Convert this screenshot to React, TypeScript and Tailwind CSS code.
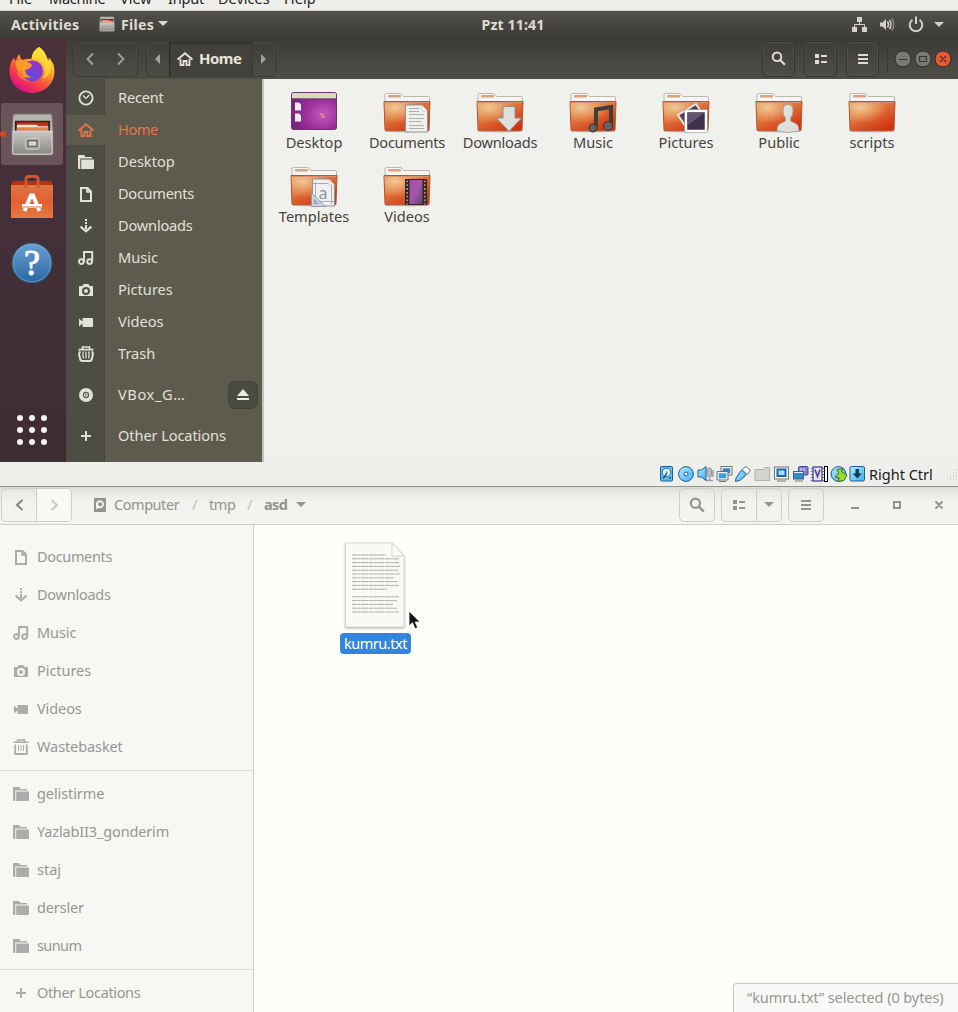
import React from "react";

type Glyph =
  | "recent" | "home" | "folder" | "doc" | "download" | "music" | "camera" | "video"
  | "trash" | "bin" | "disc" | "plus" | "search" | "list" | "menu" | "disk";

function Icon({ name, size = 16 }: { name: Glyph; size?: number }) {
  const s = { fill: "none", stroke: "currentColor", strokeWidth: 2 };
  const shapes: Record<Glyph, React.ReactNode> = {
    recent: (
      <>
        <circle cx="8" cy="8" r="6.6" {...s} strokeWidth={1.9} />
        <path d="M5 5.6 8 8.4 11.4 5" {...s} strokeWidth={1.4} />
      </>
    ),
    home: (
      <>
        <path d="M.6 8.6 8 2.2l7.4 6.4" {...s} />
        <path d="M3.5 8v6.2h3V10h3v4.2h3V8" {...s} strokeWidth={1.8} />
      </>
    ),
    folder: (
      <>
        <path d="M0 1.8Q0 1 .8 1H6l1.5 2H14v1.5H2.3V15H.8Q0 15 0 14.2z" fill="currentColor" />
        <path d="M3.2 5.5H16v8.7q0 .8-.8.8H3.2z" fill="currentColor" />
      </>
    ),
    doc: <path d="M3 2h6.500L13 5.500V15H3zM9.200 2v3.800H13" {...s} />,
    download: (
      <>
        <path d="M7 1h2v2H7zM7 4h2v2H7zM7 7h2v4H7z" fill="currentColor" />
        <path d="M2.6 8.6 8 13.4l5.4-4.8" {...s} strokeWidth={2.200} />
      </>
    ),
    music: (
      <>
        <path d="M6 12V2h8.2v9.6" {...s} strokeWidth={1.9} />
        <circle cx="3.400" cy="11.6" r="2.4" {...s} strokeWidth={1.9} />
        <circle cx="11.600" cy="11.6" r="2.4" {...s} strokeWidth={1.9} />
      </>
    ),
    camera: (
      <>
        <path fillRule="evenodd" d="M1 4.6Q1 4 1.6 4H4.500l1-2h5l1 2h2.900q.6 0 .6.600v8.800q0 .6-.6.600H1.600q-.6 0-.6-.600zM8 5a4 4 0 1 0 0 8 4 4 0 0 0 0-8z" fill="currentColor" />
        <circle cx="8" cy="9" r="2" fill="currentColor" />
      </>
    ),
    video: <path d="M1 4.500 4.500 7.500V4.600q0-.6.600-.600h9.300q.6 0 .6.600v7.800q0 .6-.6.600H5.100q-.6 0-.6-.600V9.500L1 12.500z" fill="currentColor" />,
    trash: (
      <>
        <path d="M.5 3.600h15M4.500 3V1h7v2" {...s} strokeWidth={1.700} />
        <path d="M2.200 5.300Q.2 8 1.900 11.300 2.200 15 4.200 15h7.600q2 0 2.300-3.700Q15.800 8 13.800 5.300" {...s} />
        <path d="M5.300 5.500q-1 3 .2 7M8 5.500v7M10.700 5.500q1 3-.2 7" {...s} strokeWidth={1.300} />
      </>
    ),
    bin: (
      <>
        <path d="M.5 3.200h15M4.500 3V1h7v2" {...s} strokeWidth={1.600} />
        <path d="M2.200 5.500V15h11.600V5.500" {...s} strokeWidth={1.800} />
        <path d="M5.500 6v6M8 6v6M10.500 6v6" {...s} strokeWidth={1} />
      </>
    ),
    disc: (
      <>
        <circle cx="8" cy="8" r="5.800" {...s} strokeWidth={4.400} />
        <circle cx="8" cy="8" r="2.100" {...s} strokeWidth={1} />
        <circle cx="8" cy="8" r="1" fill="currentColor" />
      </>
    ),
    plus: <path d="M8 3v10M3 8h10" {...s} />,
    search: (
      <>
        <circle cx="6.400" cy="6.200" r="4.600" {...s} strokeWidth={2.100} />
        <path d="m9.800 9.600 5 5" {...s} strokeWidth={2.400} />
      </>
    ),
    list: <path d="M2 3h4v4H2zM2 9h4v4H2zM8 4h6v2H8zM8 10h6v2H8z" fill="currentColor" />,
    menu: <path d="M3 3h10v2H3zM3 7h10v2H3zM3 11h10v2H3z" fill="currentColor" />,
    disk: (
      <>
        <path fillRule="evenodd" d="M2 1.800Q2 1 2.800 1h10.400q.8 0 .8.800v12.400q0 .8-.8.800H2.800q-.8 0-.8-.800zM8 3.200a4 4 0 0 0-4 4v5.300l2.500-1.600A4 4 0 1 0 8 3.200z" fill="currentColor" />
        <circle cx="8.200" cy="7.200" r="2" fill="currentColor" />
      </>
    ),
  };
  return (
    <svg width={size} height={size} viewBox="0 0 16 16" className="shrink-0">
      {shapes[name]}
    </svg>
  );
}

function Defs() {
  return (
    <svg width="0" height="0" className="absolute">
      <defs>
        <linearGradient id="orange" x1="0" y1="0" x2=".7" y2="1">
          <stop offset="0" stopColor="#dd9c66" />
          <stop offset=".45" stopColor="#e0743c" />
          <stop offset="1" stopColor="#d03310" />
        </linearGradient>
        <radialGradient id="glow" cx=".25" cy=".2" r=".6">
          <stop offset="0" stopColor="#efc795" />
          <stop offset="1" stopColor="#efb070" stopOpacity="0" />
        </radialGradient>
        <radialGradient id="purple" cx=".7" cy=".6" r=".8">
          <stop offset="0" stopColor="#c45bbd" />
          <stop offset=".5" stopColor="#9b2f9c" />
          <stop offset="1" stopColor="#702078" />
        </radialGradient>
        <linearGradient id="film" x1="0" y1="0" x2="1" y2="1">
          <stop offset="0" stopColor="#a04fae" />
          <stop offset=".5" stopColor="#a757a8" />
          <stop offset="1" stopColor="#62406f" />
        </linearGradient>
        <linearGradient id="steel" x1="0" y1="0" x2="0" y2="1">
          <stop offset="0" stopColor="#c9c8c4" />
          <stop offset="1" stopColor="#888883" />
        </linearGradient>
        <linearGradient id="bag" x1="0" y1="0" x2="0" y2="1">
          <stop offset="0" stopColor="#de7646" />
          <stop offset=".5" stopColor="#e25f2f" />
          <stop offset="1" stopColor="#e57845" />
        </linearGradient>
        <linearGradient id="fox" x1=".85" y1=".1" x2=".3" y2=".95">
          <stop offset="0" stopColor="#fff44f" />
          <stop offset=".35" stopColor="#ffa52a" />
          <stop offset=".65" stopColor="#ff4f3a" />
          <stop offset="1" stopColor="#e0117e" />
        </linearGradient>
        <radialGradient id="globe" cx=".4" cy=".75" r=".7">
          <stop offset="0" stopColor="#5a4be0" />
          <stop offset="1" stopColor="#9a35c8" />
        </radialGradient>
        <linearGradient id="blue" x1="0" y1="0" x2="0" y2="1">
          <stop offset="0" stopColor="#6ba0d2" />
          <stop offset="1" stopColor="#2767a5" />
        </linearGradient>
        <linearGradient id="sky" x1="0" y1="0" x2="1" y2="1">
          <stop offset="0" stopColor="#b5ecff" />
          <stop offset="1" stopColor="#3cb0ee" />
        </linearGradient>
      </defs>
    </svg>
  );
}

function FolderBase() {
  return (
    <>
      <ellipse cx="25" cy="40" rx="22" ry="1.500" fill="#000" opacity=".18" />
      <path d="M3 12V4q0-1.500 1.500-1.500H18q1.500 0 2.500 1.500l1 1.500H46q1.500 0 1.500 1.500v6z" fill="#f6f5f1" stroke="#b9b8b1" />
      <rect x="6" y="4" width="13" height="2.400" rx="1" fill="#d5a47e" />
      <path d="M2 10.500h46L47 39q0 .8-1 .8H4q-1 0-1-.8z" fill="url(#orange)" stroke="#b55532" />
      <path d="M2.500 11h45L46 38H4z" fill="url(#glow)" />
      <path d="M3 11.500h44" stroke="#dd8f6c" />
    </>
  );
}

function FileIcon({ kind }: { kind: string }) {
  if (kind === "Desktop")
    return (
      <svg width="50" height="44" viewBox="0 0 50 44">
        <rect x="2.500" y="1.500" width="45" height="37" rx="2" fill="url(#purple)" stroke="#653a66" />
        <path d="M3 3q0-1 1-1h42q1 0 1 1v4.500H3z" fill="#dadbbd" />
        <path d="M3 8h44" stroke="#6f3b70" />
        <path d="M6 11.500h4l2 2v6H6zM6 22.500h4l2 2v6H6z" fill="#f0edf2" />
        <path d="m31 24 2-2m1 3 2 2m-3 0 1-4" stroke="#e6ad77" />
      </svg>
    );
  return (
    <svg width="50" height="44" viewBox="0 0 50 44">
      <FolderBase />
      {kind === "Documents" && (
        <>
          <path d="M23.500 14H40l5.500 6v21H23.500z" fill="#efefed" stroke="#92918d" />
          <path d="M40 14v6h5.500z" fill="#fff" stroke="#b5b5b0" strokeWidth=".6" />
          <path d="M27 17.500h10M27 20.500h10M27 23.500h15M27 27.500h15M27 30.500h12M27 34.500h15M27 37.500h15" stroke="#b0afab" />
        </>
      )}
      {kind === "Downloads" && <path d="M28 15.500h12V27h6.500L34 40.500 21.500 27H28z" fill="#dededb" stroke="#8d8c87" />}
      {kind === "Music" && (
        <>
          <path d="M28 36V18.500l15-2.500v19" fill="none" stroke="#3e3d38" strokeWidth="4" />
          <circle cx="25" cy="37" r="4" fill="#66655f" stroke="#363530" />
          <circle cx="40" cy="35" r="4.500" fill="#66655f" stroke="#363530" />
        </>
      )}
      {kind === "Pictures" && (
        <>
          <path d="m17 24 18-11 10 15-18 11z" fill="#50405c" stroke="#e9e8e6" strokeWidth="2" />
          <rect x="25" y="20" width="20" height="20" fill="#40304e" stroke="#fff" strokeWidth="2.500" />
          <rect x="23.500" y="18.500" width="23" height="23" fill="none" stroke="#999" strokeWidth=".6" />
          <path d="M27 22h16L27 34z" fill="#8b7799" opacity=".5" />
        </>
      )}
      {kind === "Public" && (
        <path d="M34 13.500q-5 0-5 6 0 5 2.500 7.500v3l-6 3Q23 34.500 23 40q11 3 22 0 0-5.500-2.500-7l-6-3v-3Q39 24.500 39 19.500q0-6-5-6z" fill="#dededb" stroke="#a6a5a2" />
      )}
      {kind === "Templates" && (
        <>
          <path d="M23.500 14H40l5.500 6v21H23.500z" fill="#f0f0ef" stroke="#92918d" />
          <path d="M40 14v6h5.500z" fill="#fff" stroke="#b5b5b0" strokeWidth=".6" />
          <path d="M26.500 17v22M42.500 20v19M24 18.500h15M24 36.500h21" stroke="#a5adbd" />
          <path d="m22.500 28 14 13.500h-14zM25.500 34.500l4 4h-4z" fill="#c9d3df" fillRule="evenodd" stroke="#939fae" />
          <text x="29.500" y="34" fontSize="16" fontFamily="Noto Sans" fill="#8b93a4">a</text>
        </>
      )}
      {kind === "Videos" && (
        <>
          <rect x="23" y="14" width="22" height="26" fill="#302923" />
          <rect x="27.500" y="15" width="13" height="24" fill="url(#film)" />
          <path d="M25.200 15.500v24M42.800 15.500v24" stroke="#b3957a" strokeWidth="1.600" strokeDasharray="1.800 2" />
        </>
      )}
    </svg>
  );
}

function Cabinet({ size }: { size: number }) {
  return (
    <svg width={size} height={size} viewBox="0 0 44 46">
      <path d="M4 2h36q2 0 2 2l1 14v24q0 2-2 2H3q-2 0-2-2V18L2 4q0-2 2-2z" fill="#b4b3af" stroke="#76716e" />
      <path d="M4 9h36v11H4z" fill="#2d2522" />
      <path d="M6 10.500h32V19H6z" fill="#b93513" />
      <path d="M6 13h20l2 1.500h10V19H6z" fill="#f4e6d5" />
      <path d="M6 15.500h32V19H6z" fill="#e6804a" />
      <path d="M2 19.500h40V43H2z" fill="url(#steel)" stroke="#d6d5d2" />
      <rect x="15" y="27" width="14" height="11" rx="2" fill="#a09f9b" stroke="#d3d2cf" />
      <rect x="17.500" y="29.500" width="9" height="5.500" fill="#d7d6d2" stroke="#4d4b49" />
    </svg>
  );
}

function Firefox() {
  return (
    <svg width="48" height="48" viewBox="0 0 48 48">
      <path d="M31 1q-7 4-7.500 12Q18 12 15 14q-3-1-3.500-6Q9 10 8 15L5.500 12Q1 19 1.500 26C2 38 12 47 24 47s22.500-9 22.500-22q0-8-6-13.500.5 2 0 4Q37 4 31 1z" fill="url(#fox)" />
      <path d="M31 1q-7 4-7.500 12 8 0 11 5 5 8 0 15 6-2 8-9 1-5-2-10-5-3-9-13z" fill="#ffde35" opacity=".75" />
      <circle cx="24.500" cy="25" r="10.500" fill="url(#globe)" />
      <path d="M8 15q8-2 13 2 2 0 3 2-1 4-7 5 1 6 7 7-8 2-12-3-5-6-4-13z" fill="#f99b26" />
      <path d="M14 24q0 9 9 11.500Q12 35 9 27z" fill="#ff7435" />
    </svg>
  );
}

const places: { icon: Glyph; label: string; active?: boolean }[] = [
  { icon: "recent", label: "Recent" },
  { icon: "home", label: "Home", active: true },
  { icon: "folder", label: "Desktop" },
  { icon: "doc", label: "Documents" },
  { icon: "download", label: "Downloads" },
  { icon: "music", label: "Music" },
  { icon: "camera", label: "Pictures" },
  { icon: "video", label: "Videos" },
  { icon: "trash", label: "Trash" },
];

const narrowed: Record<string, string> = {
  Recent: "tracking-[-0.2px]",
  Home: "tracking-[-0.4px]",
  Documents: "tracking-[-0.3px]",
  Downloads: "tracking-[-0.2px]",
};

const files = ["Desktop", "Documents", "Downloads", "Music", "Pictures", "Public", "scripts", "Templates", "Videos"];

function Dock() {
  return (
    <aside className="flex w-[66px] shrink-0 flex-col bg-gradient-to-b from-[#4b3139] via-[#432f38] to-[#3d2e32]">
      <div className="flex h-[65px] items-center justify-center pr-[2px] pb-[2px]"><Firefox /></div>
      <div className="ml-px flex h-[62px] w-[62px] items-center rounded-[3px] bg-[#69545a]">
        <span className="-ml-px size-[6px] rounded-full bg-[#dc4824]" />
        <div className="ml-[4px]"><Cabinet size={45} /></div>
      </div>
      <div className="flex h-[66px] items-center pl-[10px]">
        <svg width="44" height="46" viewBox="0 0 44 46">
          <path d="M3 6h38l2 4H1z" fill="#b8320d" />
          <path d="M1 10h42v33H1z" fill="url(#bag)" />
          <path d="M16 13V4q0-2.500 3-2.500h6q3 0 3 2.500v9" fill="none" stroke="#d3562c" strokeWidth="3" />
          <path d="M14.500 36 21 20.500h2L29.500 36M12 31h20" fill="none" stroke="#fff" strokeWidth="4" />
          <path d="M12 32h20" stroke="#e47141" />
        </svg>
      </div>
      <div className="flex h-[64px] items-center pl-[11px]">
        <svg width="42" height="42" viewBox="0 0 42 42">
          <circle cx="21" cy="21" r="20" fill="url(#blue)" stroke="#315473" />
          <circle cx="21" cy="21" r="18.800" fill="none" stroke="#82b0da" opacity=".6" />
          <text x="21" y="32.500" textAnchor="middle" fontSize="36" fontFamily="Liberation Serif" fill="#fff" stroke="#fff" strokeWidth=".8">?</text>
        </svg>
      </div>
      <svg width="34" height="34" viewBox="0 0 34 34" className="mt-auto mb-[15px] ml-[15px]">
        {[5, 17, 29].map((y) => [5, 17, 29].map((x) => <circle key={`${x}-${y}`} cx={x} cy={y} r="3" fill="#f4f2f2" />))}
      </svg>
    </aside>
  );
}

function DarkButton({ icon }: { icon: Glyph }) {
  return (
    <button className="flex h-9 w-[33px] items-center justify-center rounded-[5px] border border-[#35342f] text-[#dfdbd2] shadow-[inset_0_0_0_1px_#504f48]">
      <Icon name={icon} size={icon === "search" ? 15 : 16} />
    </button>
  );
}

function DarkHeader() {
  return (
    <header className="flex h-[41px] shrink-0 items-center bg-gradient-to-b from-[#3c3b37] to-[#4f4e46] pl-[7px] text-[#a4a29b]">
      <div className="flex h-9 w-[65px] items-center justify-around rounded-[5px] border border-[#3a3934] shadow-[inset_0_0_0_1px_#4c4b44]">
        <svg width="10" height="14" viewBox="0 0 10 14"><path d="M8 1.500 2.500 7 8 12.500" fill="none" stroke="currentColor" strokeWidth="1.800" /></svg>
        <svg width="10" height="14" viewBox="0 0 10 14"><path d="M2 1.500 7.500 7 2 12.500" fill="none" stroke="currentColor" strokeWidth="1.800" /></svg>
      </div>
      <div className="ml-2 flex h-9 w-[130px] items-stretch rounded-[5px] border border-[#3a3934] shadow-[inset_0_0_0_1px_#4c4b44]">
        <div className="flex w-[22px] items-center justify-center pr-[2px]"><svg width="6" height="10"><path d="M6 0v10L1 5z" fill="currentColor" /></svg></div>
        <div className="flex w-[84px] items-center gap-[6px] border-l border-[#2b2a26] bg-[#42413b] pl-[7px] text-[15px] font-bold text-[#e7e3d9] shadow-[inset_0_2px_2px_#33322e]">
          <Icon name="home" /> <span className="tracking-[-0.5px]">Home</span>
        </div>
        <div className="flex flex-1 items-center justify-center"><svg width="6" height="10"><path d="M0 0v10l5-5z" fill="currentColor" /></svg></div>
      </div>
      <div className="ml-auto flex items-center gap-[9px]">
        <DarkButton icon="search" /><DarkButton icon="list" /><DarkButton icon="menu" />
      </div>
      <div className="ml-[8px] h-7 w-px bg-[#393833]" />
      <svg width="70" height="20" viewBox="0 0 70 20">
        <g stroke="#302f2b">
          <circle cx="15" cy="10" r="8" fill="#7a7972" />
          <circle cx="35" cy="10" r="8" fill="#7a7972" />
          <circle cx="55" cy="10" r="8" fill="#e95831" />
        </g>
        <path d="M11 10.500h8M31.500 7.500h7v5h-7zM52 7l6 6m0-6-6 6" fill="none" stroke="#3b3733" strokeWidth="1.200" />
      </svg>
    </header>
  );
}

function DarkSidebar() {
  return (
    <nav className="flex w-[198px] shrink-0 flex-col border-r-2 border-[#c4c3bb] bg-[linear-gradient(to_right,#4e4d44_0_38px,#45443b_38px_39px,#5c5b4d_39px)] pt-[3px] text-[14.6px] text-[#e2e1d8]">
      {places.map((p) => (
        <div key={p.label} className={p.active ? "flex h-8 items-center bg-[linear-gradient(#5c5b4d,#5c5b4d)] bg-[length:100%_30px] bg-center bg-no-repeat text-[#e77449]" : "flex h-8 items-center"}>
          <span className="flex w-[39px] justify-center"><Icon name={p.icon} /></span>
          <span className={`ml-[13px] ${narrowed[p.label] ?? ""}`}>{p.label}</span>
        </div>
      ))}
      <div className="mt-1 flex h-[41px] items-center">
        <span className="flex w-[39px] justify-center"><Icon name="disc" size={14} /></span>
        <span className="ml-[13px] tracking-[0.6px]">VBox_G…</span>
        <span className="mr-1 ml-auto flex h-[28px] w-[30px] items-center justify-center rounded-[7px] border border-[#424139] bg-[#4b4a41]">
          <svg width="12" height="12"><path d="m6 0 6 7H0zM0 9h12v2H0z" fill="#eceae4" /></svg>
        </span>
      </div>
      <div className="flex h-[41px] items-center">
        <span className="flex w-[39px] justify-center"><Icon name="plus" /></span>
        <span className="ml-[13px] tracking-[-0.1px]">Other Locations</span>
      </div>
    </nav>
  );
}

function TopPanel() {
  return (
    <div className="grid h-[27px] shrink-0 grid-cols-[1fr_auto_1fr] items-center bg-gradient-to-b from-[#52514a] to-[#3c3b37] text-[14.2px] font-bold text-[#dfdbd2]">
      <div className="flex items-center pl-[11px]">
        <span className="w-[68px] tracking-[0.25px]">Activities</span>
        <span className="mr-[6px] ml-[20px]"><Cabinet size={16} /></span>
        <span className="tracking-[0.25px]">Files</span>
        <svg width="10" height="6" className="ml-[4px]"><path d="M0 0h10L5 5z" fill="currentColor" /></svg>
      </div>
      <span className="translate-x-[34px] tracking-[0.1px]">Pzt 11:41</span>
      <svg width="106" height="20" viewBox="0 0 106 20" className="justify-self-end text-[#d5d2c9]">
        <path d="M5 2h5v5H5zM0 12h5v5H0zM10 12h5v5h-5z" fill="currentColor" />
        <path d="M7.500 7v2.500M2.500 12V9.500h10V12" fill="none" stroke="currentColor" />
        <path d="M28 7.500h2.500L34 4v11l-3.500-3.500H28z" fill="currentColor" />
        <path d="M35.500 6.500q2 3 0 6M37.500 5q3 4.500 0 9" fill="none" stroke="currentColor" strokeWidth="1.500" />
        <path d="M39.800 3.500q4 6 0 12" fill="none" stroke="#8b8982" strokeWidth="1.500" />
        <path d="M60.500 4.800a6.300 6.300 0 1 0 7 0M64 1.500V9" fill="none" stroke="currentColor" strokeWidth="2" />
        <path d="M82 7h10l-5 5z" fill="currentColor" />
      </svg>
    </div>
  );
}

function DeviceIcons() {
  const o = { stroke: "#1d5c9c", strokeWidth: 1 };
  return (
    <svg width="208" height="18" viewBox="0 0 208 18">
      <rect x="1.500" y="1.500" width="12" height="14.500" rx="1" fill="#62bdec" {...o} />
      <circle cx="7.500" cy="7.500" r="4.200" fill="#f1faff" stroke="#1f70ae" />
      <circle cx="7.500" cy="7.500" r="1.500" fill="#7cc5ea" />
      <path d="m4 13.500 4-5M10 13h2" stroke="#164b7c" strokeWidth="1.400" />
      <circle cx="27" cy="9" r="7.400" fill="url(#sky)" {...o} />
      <circle cx="27" cy="9" r="2" fill="#fff" {...o} />
      <path d="M39 5h3.500l4.500-3.500v14L42.500 12H39z" fill="url(#sky)" {...o} />
      <rect x="48.500" y="3" width="4" height="9" rx="1.500" fill="#bdbdbd" stroke="#999" />
      <path d="M47 15.500h7M50.500 13v3M54 5v7" stroke="#999" strokeWidth="1.500" />
      <rect x="63" y="2.500" width="9" height="6.500" fill="#3384c6" stroke="#f2f2ee" strokeWidth="1.500" />
      <rect x="62" y="1.500" width="11" height="8.500" fill="none" stroke="#666" strokeWidth=".9" />
      <rect x="59" y="7.500" width="9" height="6.500" fill="#3c9dde" stroke="#f2f2ee" strokeWidth="1.500" />
      <path d="M58 6.500h11V15H58zM60 16.500h7" fill="none" stroke="#666" strokeWidth=".9" />
      <path d="m77 13 5.500-8 5 4.500-6 5.500-5 1.500z" fill="url(#sky)" {...o} />
      <path d="M83 4.500 87 1.500 91.500 5.500 88 9.500z" fill="#fff" stroke="#55728d" />
      <path d="M96 15.500V4.500h8.500l1-2h5v13z" fill="#d4d3d0" stroke="#b2b1ae" />
      <rect x="115.500" y="2" width="14" height="12" fill="#f4f5f2" stroke="#74756f" />
      <rect x="118.500" y="4.500" width="8" height="6.500" fill="#a9daf8" stroke="#1769b2" strokeWidth="2" />
      <path d="M118 16h9" stroke="#777" />
      <rect x="139.500" y="1.500" width="9.500" height="8.500" rx="1" fill="#827bd0" stroke="#4a4699" />
      <rect x="134.500" y="6.500" width="10" height="7.500" fill="#2f8ed0" stroke="#4c6179" />
      <path d="M135 7.500h9M137 16h6M142 3v3M145 3v3" stroke="#f2f2f2" />
      <path d="M136 16h8" stroke="#777" />
      <rect x="154" y="2" width="9" height="14" fill="#e7e5ff" stroke="#433f91" strokeWidth="1.300" />
      <path d="M152.800 3v13M164 3v13" stroke="#6c65b7" strokeWidth="2" strokeDasharray="1 2" />
      <path d="m156 4.500 2.500 7 2.500-7" fill="none" stroke="#4c4799" strokeWidth="1.700" />
      <rect x="165.500" y="1.500" width="3" height="15" fill="#fff" stroke="#000" />
      <circle cx="179.500" cy="9" r="7.400" fill="url(#sky)" {...o} />
      <path d="m178 4.500 6-1-1.500 3L188 10l-3 5.500-6.500 1 2-3.500-4.500-1 4-3.500z" fill="#9bdc2c" stroke="#466c1e" />
      <rect x="191" y="1.500" width="14.500" height="14.500" rx="1.500" fill="url(#sky)" {...o} />
      <path d="M196.500 4h3.500v4.500h3l-4.700 5-4.800-5h3z" fill="#153e62" />
    </svg>
  );
}

const lowerPlaces: { icon: Glyph; label: string; fit: string }[] = [
  { icon: "doc", label: "Documents", fit: "tracking-[-0.35px]" },
  { icon: "download", label: "Downloads", fit: "tracking-[-0.25px]" },
  { icon: "music", label: "Music", fit: "tracking-[-0.1px]" },
  { icon: "camera", label: "Pictures", fit: "tracking-[-0.05px]" },
  { icon: "video", label: "Videos", fit: "tracking-[-0.1px]" },
  { icon: "bin", label: "Wastebasket", fit: "tracking-[-0.1px]" },
];
const bookmarks = [
  { label: "gelistirme", fit: "tracking-[-0.1px]" },
  { label: "YazlabII3_gonderim", fit: "tracking-[-0.15px]" },
  { label: "staj", fit: "tracking-normal" },
  { label: "dersler", fit: "tracking-[-0.15px]" },
  { label: "sunum", fit: "tracking-[-0.6px]" },
];

function LightRow({ icon, label, fit }: { icon: Glyph; label: string; fit: string }) {
  return (
    <div className="flex h-[38px] items-center gap-2 pl-[13px]">
      <span className="text-[#acadaa]"><Icon name={icon} /></span>
      <span className={fit}>{label}</span>
    </div>
  );
}

function LightHeader() {
  const box = "flex h-[34px] items-center rounded-[5px] border border-[#cfcfc9]";
  return (
    <header className="flex h-[38px] shrink-0 items-start border-b border-[#cfcfca] bg-[linear-gradient(#dcdcd7,#ebebe6_6px,#f2f2ee_16px,#f4f4f0)] pt-px pl-px text-[#92938f]">
      <div className={`${box} w-[71px]`}>
        <span className="flex h-full w-[35px] items-center justify-center border-r border-[#cfcfc9]">
          <svg width="9" height="12"><path d="M7.500 1 2 6l5.500 5" fill="none" stroke="#868783" strokeWidth="2" /></svg>
        </span>
        <span className="flex h-full flex-1 items-center justify-center rounded-r bg-[#f8f8f4]">
          <svg width="9" height="12"><path d="M1.500 1 7 6l-5.500 5" fill="none" stroke="#c9cac4" strokeWidth="2" /></svg>
        </span>
      </div>
      <div className="ml-[20px] flex h-[34px] items-center text-[14.5px]">
        <Icon name="disk" />
        <span className="ml-[6px] w-[78px] tracking-[-0.45px]">Computer</span>
        <span className="w-[17px] text-[#bbbcb7]">/</span>
        <span className="w-[38px] tracking-[-0.4px]">tmp</span>
        <span className="w-[17px] text-[#bbbcb7]">/</span>
        <span className="w-[32px] font-bold tracking-[-0.6px]">asd</span>
        <svg width="10" height="6"><path d="M0 0h10L5 5z" fill="currentColor" /></svg>
      </div>
      <div className="ml-auto flex gap-[6px]">
        <button className={`${box} w-9 justify-center`}><Icon name="search" /></button>
        <div className={`${box} w-[61px]`}>
          <span className="flex h-full w-[35px] items-center justify-center border-r border-[#cfcfc9]"><Icon name="list" /></span>
          <span className="flex flex-1 justify-center"><svg width="10" height="6"><path d="M0 0h10L5 5z" fill="currentColor" /></svg></span>
        </div>
        <button className={`${box} w-9 justify-center`}><Icon name="menu" /></button>
      </div>
      <svg width="134" height="34" viewBox="0 0 134 34">
        <path d="M27 20h8M70 14h6v6h-6zM111.500 13.500l7 7m0-7-7 7" fill="none" stroke="currentColor" strokeWidth="2" />
      </svg>
    </header>
  );
}

function TextFile() {
  const lines = [34, 47, 47, 48, 46, 48, 42, 45, 47, 35, 0, 47, 45, 41, 45, 47];
  return (
    <svg width="64" height="87" viewBox="0 0 64 87" className="drop-shadow-[0_1px_1px_rgba(0,0,0,0.3)]">
      <path d="M1.500 1h46.500l12 13v71H1.500z" fill="#f9f9f6" stroke="#d4d5d1" strokeWidth=".8" />
      <path d="M48 1v13h12z" fill="#fff" stroke="#d2d3ce" />
      {lines.map((w, i) => (
        <path key={i} d={`M8 ${13 + i * 3.800}h${w}`} stroke="#a3a4a0" strokeWidth=".9" strokeDasharray="5 .5 3 .5 7 .6" />
      ))}
    </svg>
  );
}

export default function App() {
  return (
    <div className="flex h-[1012px] w-[958px] flex-col overflow-hidden bg-[#fefefb] font-['Noto_Sans','Open_Sans',sans-serif]">
      <Defs />
      <div className="flex h-[11px] shrink-0 items-end overflow-hidden border-b border-[#d5d5d1] bg-[#eeeeeb] pb-[2px] pl-[9px] text-[14.5px] leading-5 text-[#1f1f1f]">
        <span className="w-[40px]">File</span><span className="w-[71px] tracking-[-0.25px]">Machine</span><span className="w-[48px]">View</span>
        <span className="w-[50px] tracking-[-0.2px]">Input</span><span className="w-[66px]">Devices</span><span>Help</span>
      </div>
      <TopPanel />
      <section className="flex h-[424px] shrink-0">
        <Dock />
        <div className="flex min-w-0 flex-1 flex-col">
          <DarkHeader />
          <div className="flex min-h-0 flex-1">
            <DarkSidebar />
            <main className="grid flex-1 auto-rows-[74px] grid-cols-[repeat(7,93px)] content-start bg-[#f0f0ec] pt-[12px] pl-[3px]">
              {files.map((f) => (
                <div key={f} className="flex flex-col items-center">
                  <FileIcon kind={f} />
                  <span className={`-mt-[3px] translate-x-[0.5px] text-[14.6px] leading-5 whitespace-nowrap text-[#45443f] ${narrowed[f] ?? ""}`}>{f}</span>
                </div>
              ))}
            </main>
          </div>
        </div>
      </section>
      <div className="flex h-[25px] shrink-0 items-center justify-end border-b border-[#96968f] bg-[#eeeeea] text-[14.5px] text-[#1b1b1b]">
        <DeviceIcons />
        <span className="ml-[2px] w-[77px] translate-y-px">Right Ctrl</span>
        <svg width="12" height="14"><path d="M10 3h2M7 6h5M4 9h8M1 12h11" stroke="#b9b9b4" strokeDasharray="1 2" /></svg>
      </div>
      <LightHeader />
      <div className="flex min-h-0 flex-1">
        <nav className="w-[254px] shrink-0 border-r border-[#cfcfca] bg-[#f7f7f3] pt-[13px] text-[14.5px] text-[#969793]">
          {lowerPlaces.map((p) => <LightRow key={p.label} {...p} />)}
          <div className="mt-[4px] mb-[4px] h-px bg-[#dcddd8]" />
          {bookmarks.map((b) => <LightRow key={b.label} icon="folder" {...b} />)}
          <div className="mt-[4px] mb-[4px] h-px bg-[#dcddd8]" />
          <LightRow icon="plus" label="Other Locations" fit="tracking-[-0.35px]" />
        </nav>
        <main className="relative flex-1 pt-[17px] pl-[86px]">
          <div className="flex w-[71px] flex-col items-center">
            <TextFile />
            <span className="mt-[4px] flex h-[21px] w-[71px] items-center justify-center rounded-[4px] bg-[#3584dc] text-[14.5px] tracking-[-0.45px] text-white">kumru.txt</span>
          </div>
          <svg width="13" height="20" viewBox="0 0 13 20" className="absolute top-[85px] left-[154px]">
            <path d="M1 1v15l3.500-3.300 2.500 6 2.700-1.200-2.500-5.500H12z" fill="#161616" stroke="#fff" strokeWidth=".8" />
          </svg>
          <div className="absolute right-0 bottom-0 flex h-[29px] w-[225px] items-center rounded-tl-[4px] border-t border-l border-[#c9cac5] bg-[#f9f9f7] pl-[13px] text-[14.5px] tracking-[-0.08px] whitespace-nowrap text-[#969793]">
            “kumru.txt” selected (0 bytes)
          </div>
        </main>
      </div>
    </div>
  );
}
